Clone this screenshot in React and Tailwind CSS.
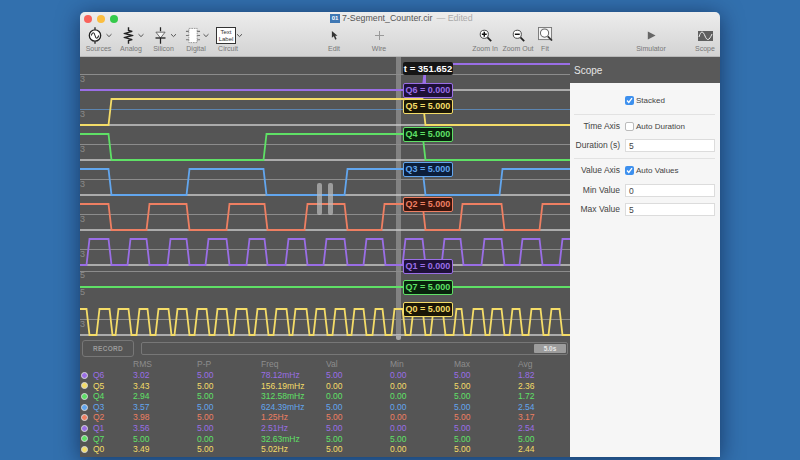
const PURPLE = '#9a6ee6';
const YELLOW = '#f4dc68';
const GREEN = '#5fe066';
const BLUE = '#62a6ee';
const RED = '#ee7f62';

// edge x positions for each trace (the level flips at each one)
const traces = [
  { color: PURPLE, high: 64, start: 0, edges: [424] },
  { color: YELLOW, high: 99, start: 0, edges: [110, 424] },
  { color: GREEN, high: 134, start: 1, edges: [110, 265, 424] },
  { color: BLUE, high: 169, start: 1, edges: [110, 188, 265, 346, 424, 501] },
  { color: RED, high: 204, start: 1, edges: [110, 148, 188, 228, 266, 306, 346, 383, 424, 461, 503, 541] },
  { color: PURPLE, high: 239, start: 0, edges: [88, 110, 129, 148, 169, 188, 207, 228, 248, 266, 287, 306, 325, 346, 365, 384, 404, 424, 443, 462, 483, 503, 521, 541, 561] },
  {
    color: YELLOW, high: 309, start: 1,
    edges: [88, 98, 111, 117, 130, 138, 149, 157, 170, 176, 188, 196, 208, 216, 228, 235, 248, 256, 267, 275, 288, 294, 308, 315, 326, 334, 346, 353, 365, 374, 384, 393, 404, 412, 424, 432, 444, 455, 463, 472, 484, 491, 503, 511, 521, 530, 542, 550, 561],
  },
];

const tracePoints = ({ high, start, edges }) => {
  const low = high + 26;
  let level = start;
  const pts = [[80, level ? high : low]];
  edges.forEach((x) => {
    pts.push([x - 1.5, level ? high : low]);
    level = 1 - level;
    pts.push([x + 1.5, level ? high : low]);
  });
  pts.push([570, level ? high : low]);
  return pts.map(([x, y]) => `${x - 80},${y - 57}`).join(' ');
};

const midLines = [74, 144, 179, 214, 249, 271, 319];
const baseLines = [90, 125, 160, 195, 230, 265, 335];
const scaleMarks = [
  ['3', 79], ['3', 114], ['3', 149], ['3', 184], ['3', 219], ['3', 254], ['5', 275], ['5', 292], ['3', 324],
];

const stats = [
  ['Q6', PURPLE, '3.02', '5.00', '78.12mHz', '5.00', '0.00', '5.00', '1.82'],
  ['Q5', YELLOW, '3.43', '5.00', '156.19mHz', '0.00', '0.00', '5.00', '2.36'],
  ['Q4', GREEN, '2.94', '5.00', '312.58mHz', '0.00', '0.00', '5.00', '1.72'],
  ['Q3', BLUE, '3.57', '5.00', '624.39mHz', '5.00', '0.00', '5.00', '2.54'],
  ['Q2', RED, '3.98', '5.00', '1.25Hz', '5.00', '0.00', '5.00', '3.17'],
  ['Q1', PURPLE, '3.56', '5.00', '2.51Hz', '5.00', '0.00', '5.00', '2.54'],
  ['Q7', GREEN, '5.00', '0.00', '32.63mHz', '5.00', '5.00', '5.00', '5.00'],
  ['Q0', YELLOW, '3.49', '5.00', '5.02Hz', '5.00', '0.00', '5.00', '2.44'],
];

function Chevron({ gap }) {
  return (
    <svg width="7" height="5" viewBox="0 0 7 5" className={`shrink-0 ${gap}`}>
      <path d="M1 1.2 L3.5 3.6 L6 1.2" fill="none" stroke="#555" strokeWidth="1" />
    </svg>
  );
}

function SourcesIcon() {
  return (
    <svg width="15" height="17" viewBox="0 0 18 20">
      <path d="M9 0V3M9 17V20" stroke="#222" strokeWidth="1.6" />
      <circle cx="9" cy="10" r="6.8" fill="#fff" stroke="#222" strokeWidth="1.6" />
      <path d="M4.5 10 C6 5.5 8 5.5 9 10 C10 14.5 12 14.5 13.5 10" fill="none" stroke="#222" strokeWidth="1.3" />
    </svg>
  );
}

function AnalogIcon() {
  return (
    <svg width="10" height="17" viewBox="0 0 12 20">
      <path d="M6 0V4 L10.5 5 L1.5 7.5 L10.5 10 L1.5 12.5 L10.5 15 L6 16V20" fill="none" stroke="#222" strokeWidth="1.7" />
    </svg>
  );
}

function SiliconIcon() {
  return (
    <svg width="15" height="17" viewBox="0 0 18 20">
      <path d="M9 0V5M9 13V20" stroke="#222" strokeWidth="1.5" />
      <path d="M3.5 6 H14.5 L9 13 Z" fill="#f4f4f4" stroke="#555" strokeWidth="1" />
      <path d="M3 13H15" stroke="#222" strokeWidth="1.6" />
    </svg>
  );
}

function DigitalIcon() {
  return (
    <svg width="15" height="17" viewBox="0 0 18 20">
      <rect x="4" y="1.5" width="10" height="17" fill="#fff" stroke="#888" strokeWidth="1" strokeDasharray="2 1" />
      <path d="M0.5 5H4M0.5 10H4M0.5 15H4M14 5H17.5M14 10H17.5M14 15H17.5" stroke="#777" strokeWidth="1.3" />
    </svg>
  );
}

function EditIcon() {
  return (
    <svg width="9" height="11" viewBox="0 0 12 14">
      <path d="M2.5 1 L2.5 10 L5 8 L7 12.5 L8.8 11.6 L7 7.4 L10 7.2 Z" fill="#333" />
    </svg>
  );
}

function MagnifierIcon({ mark }) {
  return (
    <svg width="13" height="13" viewBox="0 0 16 16">
      <circle cx="6.5" cy="6.5" r="5" fill="#fff" stroke="#444" strokeWidth="1.2" />
      <path d="M10.4 10.4 L15 15" stroke="#222" strokeWidth="2.2" />
      {mark === 'plus' && <path d="M3.5 6.5H9.5M6.5 3.5V9.5" stroke="#111" strokeWidth="1.8" />}
      {mark === 'minus' && <path d="M3.5 6.5H9.5" stroke="#111" strokeWidth="1.8" />}
    </svg>
  );
}

function FitIcon() {
  return (
    <svg width="15" height="14" viewBox="0 0 16 15">
      <rect x="0.5" y="0.5" width="14" height="13" fill="#f2f2f2" stroke="#777" strokeWidth="1" />
      <circle cx="7" cy="6.5" r="4.4" fill="#fff" stroke="#666" strokeWidth="1.1" />
      <path d="M10.4 10 L15 14.5" stroke="#333" strokeWidth="1.8" />
    </svg>
  );
}

function ScopeIcon() {
  return (
    <svg width="15" height="10" viewBox="0 0 15 10">
      <rect width="15" height="10" fill="#5f5f5f" />
      <path d="M1 6 C3 -1 5 0 7 5 C9 10 11 10 14 3" fill="none" stroke="#eee" strokeWidth="1" />
    </svg>
  );
}

function ToolItem({ label, width, left, shift, children }) {
  return (
    <div className={`flex flex-col items-center shrink-0 ${width} ${left}`}>
      <div className={`h-[21px] flex items-center justify-center ${shift}`}>{children}</div>
      <span className="-mt-[2px] text-[7px] leading-[10px] text-[#777] whitespace-nowrap">{label}</span>
    </div>
  );
}

function Toolbar() {
  return (
    <div className="h-[45px] shrink-0 rounded-t-[5px] bg-gradient-to-b from-[#ededed] to-[#d3d3d3] border-b border-[#b8b8b8] relative">
      <div className="absolute left-[4px] top-[3px] flex gap-[5px]">
        <span className="w-[8px] h-[8px] rounded-full bg-[#f9625b]" />
        <span className="w-[8px] h-[8px] rounded-full bg-[#fbbe40]" />
        <span className="w-[8px] h-[8px] rounded-full bg-[#35ca4b]" />
      </div>
      <div className="h-[13px] flex items-center pl-[250px] text-[8.8px] text-[#555]">
        <span className="w-[10px] h-[9px] mr-[2px] bg-[#3f78b4] text-[6px] leading-[9px] text-white text-center font-bold">01</span>
        <span>7-Segment_Counter.cir</span>
        <span className="ml-[4px] text-[#aaa]">— Edited</span>
      </div>
      <div className="flex items-start pl-[2px]">
        <ToolItem label="Sources" width="w-[33px]" left="" shift="translate-x-[1.5px]">
          <SourcesIcon /><Chevron gap="ml-[3px]" />
        </ToolItem>
        <ToolItem label="Analog" width="w-[32px]" left="" shift="translate-x-[2.5px]">
          <AnalogIcon /><Chevron gap="ml-[4px]" />
        </ToolItem>
        <ToolItem label="Silicon" width="w-[33px]" left="" shift="translate-x-[1px]">
          <SiliconIcon /><Chevron gap="ml-[2px]" />
        </ToolItem>
        <ToolItem label="Digital" width="w-[32px]" left="" shift="translate-x-[1.5px]">
          <DigitalIcon /><Chevron gap="ml-[2px]" />
        </ToolItem>
        <ToolItem label="Circuit" width="w-[32px]" left="" shift="">
          <span className="w-[20px] h-[17px] ml-[3px] bg-white border border-[#333] text-[6px] leading-[7px] text-center text-[#333] flex items-center justify-center">Text Label</span>
          <Chevron gap="" />
        </ToolItem>
        <ToolItem label="Edit" width="w-[30px]" left="ml-[75px]" shift="">
          <EditIcon />
        </ToolItem>
        <ToolItem label="Wire" width="w-[30px]" left="ml-[15px]" shift="">
          <svg width="9" height="9" viewBox="0 0 9 9"><path d="M4.5 0V9M0 4.5H9" stroke="#999" strokeWidth="1" /></svg>
        </ToolItem>
        <ToolItem label="Zoom In" width="w-[32px]" left="ml-[75px]" shift="">
          <MagnifierIcon mark="plus" />
        </ToolItem>
        <ToolItem label="Zoom Out" width="w-[34px]" left="" shift="">
          <MagnifierIcon mark="minus" />
        </ToolItem>
        <ToolItem label="Fit" width="w-[20px]" left="" shift="-translate-y-[2px]">
          <FitIcon />
        </ToolItem>
        <ToolItem label="Simulator" width="w-[36px]" left="ml-[78px]" shift="">
          <svg width="9" height="9" viewBox="0 0 11 11"><path d="M1 0.5 L10.5 5.5 L1 10.5 Z" fill="#666" /></svg>
        </ToolItem>
        <ToolItem label="Scope" width="w-[26px]" left="ml-[23px]" shift="">
          <ScopeIcon />
        </ToolItem>
      </div>
    </div>
  );
}

function ValueTag({ top, text, color, bg }) {
  return (
    <div
      className="absolute left-[323px] w-[50px] h-[15px] rounded-[2px] border text-[9px] leading-[13px] font-bold text-center whitespace-nowrap"
      style={{ top: top - 57, color, borderColor: color, backgroundColor: bg }}
    >
      {text}
    </div>
  );
}

function Plot() {
  return (
    <div className="relative h-[281px] shrink-0 bg-[#555555] overflow-hidden">
      <svg width="490" height="281" viewBox="0 0 490 281" className="block">
        <rect x="316" y="0" width="5" height="281" fill="#a8a8a8" opacity="0.55" />
        <path d="M0 52.5H490" stroke="#62a6ee" strokeWidth="1" opacity="0.6" />
        {midLines.map((y) => (
          <path key={y} d={`M0 ${y - 57 + 0.5}H490`} stroke="#8c8c8c" strokeWidth="1" />
        ))}
        {baseLines.map((y) => (
          <path key={y} d={`M0 ${y - 57}H490`} stroke="#c9c9c9" strokeWidth="1.5" />
        ))}
        {traces.map((t) => (
          <polyline key={t.high} points={tracePoints(t)} fill="none" stroke={t.color} strokeWidth="1.8" />
        ))}
        <path d="M0 230H490" stroke={GREEN} strokeWidth="1.8" />
        {scaleMarks.map(([mark, y]) => (
          <text key={y} x="0" y={y - 57 + 3} fontSize="9" fill="#8a8a8a" fontFamily="Liberation Sans">{mark}</text>
        ))}
      </svg>
      <div className="absolute left-[237px] top-[126px] w-[5px] h-[32px] rounded-[2px] bg-[#bcbcbc]/70" />
      <div className="absolute left-[248px] top-[126px] w-[5px] h-[32px] rounded-[2px] bg-[#bcbcbc]/70" />
      <div className="absolute left-[323px] top-[5px] w-[50px] h-[13px] rounded-[2px] bg-[#151515] text-[9.5px] leading-[13px] font-bold text-center text-white whitespace-nowrap">t = 351.652</div>
      <div className="absolute left-[344px] top-[18px] w-[2px] h-[9px] bg-[#9a6ee6]" />
      <ValueTag top={83} text="Q6 = 0.000" color={PURPLE} bg="#1e1038" />
      <ValueTag top={99} text="Q5 = 5.000" color={YELLOW} bg="#1a1606" />
      <ValueTag top={127} text="Q4 = 5.000" color={GREEN} bg="#08220c" />
      <ValueTag top={162} text="Q3 = 5.000" color={BLUE} bg="#0c1e3a" />
      <ValueTag top={197} text="Q2 = 5.000" color={RED} bg="#3a140c" />
      <ValueTag top={259} text="Q1 = 0.000" color={PURPLE} bg="#1e1038" />
      <ValueTag top={280} text="Q7 = 5.000" color={GREEN} bg="#08220c" />
      <ValueTag top={302} text="Q0 = 5.000" color={YELLOW} bg="#1a1606" />
    </div>
  );
}

function StatsPanel() {
  return (
    <div className="flex-1 bg-[#555555] pt-[2px] relative">
      <div className="flex items-center gap-[7px] pl-[2px] pr-[2px] h-[17px]">
        <div className="w-[52px] h-[17px] rounded-[3px] border border-[#777] flex items-center justify-center text-[6.5px] font-bold tracking-[0.3px] text-[#9a9a9a]">RECORD</div>
        <div className="flex-1 h-[13px] rounded-[2px] border border-[#777] flex items-center justify-end pr-[1px]">
          <span className="w-[32px] h-[9px] rounded-[1px] bg-[#9c9c9c] text-[6.5px] leading-[9px] font-bold text-center text-[#e8e8e8]">5.0s</span>
        </div>
      </div>
      <div className="absolute left-[316px] top-[-3px] w-[5px] h-[5px] rounded-b-[2px] bg-[#a8a8a8]" />
      <div className="mt-[2px] grid grid-cols-[53px_64px_64px_65px_64px_64px_64px_1fr] h-[11px] text-[8.5px] leading-[11px] text-[#8d8d8d]">
        <span />
        <span>RMS</span>
        <span>P-P</span>
        <span>Freq</span>
        <span>Val</span>
        <span>Min</span>
        <span>Max</span>
        <span>Avg</span>
      </div>
      {stats.map(([name, color, ...values]) => (
        <div key={name} className="grid grid-cols-[53px_64px_64px_65px_64px_64px_64px_1fr] h-[10.6px] text-[8.5px] leading-[10.6px]" style={{ color }}>
          <span className="flex items-center">
            <span className="ml-[1px] mr-[5px] w-[7px] h-[7px] rounded-full border border-[#d8d8d8]" style={{ backgroundColor: color }} />
            {name}
          </span>
          {values.map((v, i) => (
            <span key={i}>{v}</span>
          ))}
        </div>
      ))}
    </div>
  );
}

function CheckBox({ checked }) {
  return checked ? (
    <span className="w-[9px] h-[9px] rounded-[2px] bg-[#3d90ee] flex items-center justify-center shrink-0">
      <svg width="7" height="7" viewBox="0 0 7 7"><path d="M1 3.5 L2.8 5.5 L6 1.2" fill="none" stroke="#fff" strokeWidth="1.3" /></svg>
    </span>
  ) : (
    <span className="w-[9px] h-[9px] rounded-[2px] bg-white border border-[#bbb] shrink-0" />
  );
}

function FieldRow({ label, className, children }) {
  return (
    <div className={`flex items-center ${className}`}>
      <span className="w-[49px] text-right shrink-0 whitespace-nowrap">{label}</span>
      <div className="ml-[5px] flex-1 flex items-center gap-[2px] text-[8px]">{children}</div>
    </div>
  );
}

function NumberBox({ value }) {
  return <div className="h-[13px] flex-1 bg-white border border-[#dcdcdc] pl-[3px] leading-[12px] text-[8.5px]">{value}</div>;
}

function ScopePanel() {
  return (
    <div className="w-[150px] shrink-0 flex flex-col bg-[#f6f6f6] text-[8.5px] text-[#444]">
      <div className="h-[26px] shrink-0 bg-[#595959] flex items-center pl-[4px] pt-[1px] text-[10px] text-[#e6e6e6]">Scope</div>
      <div className="pl-[1px] pr-[5px]">
        <FieldRow label="" className="mt-[12px] h-[11px]">
          <CheckBox checked />
          <span>Stacked</span>
        </FieldRow>
        <div className="mt-[8px] ml-[3px] h-px bg-[#e2e2e2]" />
        <FieldRow label="Time Axis" className="mt-[6px] h-[11px]">
          <CheckBox />
          <span>Auto Duration</span>
        </FieldRow>
        <FieldRow label="Duration (s)" className="mt-[7px] h-[13px]">
          <NumberBox value="5" />
        </FieldRow>
        <div className="mt-[6px] ml-[3px] h-px bg-[#e2e2e2]" />
        <FieldRow label="Value Axis" className="mt-[6px] h-[11px]">
          <CheckBox checked />
          <span>Auto Values</span>
        </FieldRow>
        <FieldRow label="Min Value" className="mt-[8px] h-[13px]">
          <NumberBox value="0" />
        </FieldRow>
        <FieldRow label="Max Value" className="mt-[6px] h-[13px]">
          <NumberBox value="5" />
        </FieldRow>
      </div>
    </div>
  );
}

export default function App() {
  return (
    <div className="w-[800px] h-[460px] overflow-hidden bg-[#3270ae] pl-[80px] pt-[12px] font-['Liberation_Sans',sans-serif]">
      <div className="w-[640px] h-[445px] flex flex-col rounded-t-[5px] shadow-[0_3px_22px_rgba(0,10,40,0.55)]">
        <Toolbar />
        <div className="flex-1 flex min-h-0">
          <div className="w-[490px] shrink-0 flex flex-col">
            <Plot />
            <StatsPanel />
          </div>
          <ScopePanel />
        </div>
      </div>
    </div>
  );
}
